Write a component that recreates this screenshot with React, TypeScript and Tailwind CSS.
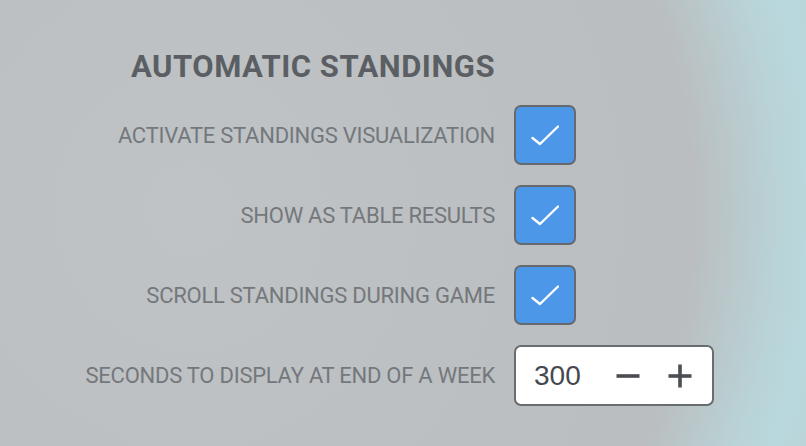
import React from "react";

function Check() {
  return (
    <div className="flex h-[60px] w-[62px] items-center justify-center rounded-[7px] border-2 border-[#66696d] bg-[#4d97e9]">
      <svg width="28" height="22" viewBox="0 0 28 22" className="mt-[1px]">
        <polyline points="1.5,13 9,19 27,1.5" fill="none" stroke="#ffffff" strokeWidth="2.4" strokeLinecap="round" strokeLinejoin="round" />
      </svg>
    </div>
  );
}

function Label({ children }: { children: React.ReactNode }) {
  return (
    <div className="flex h-[60px] items-center justify-end whitespace-nowrap text-[22px] tracking-[-0.25px] text-[#74787c]" style={{ fontFamily: "Roboto, 'Liberation Sans', sans-serif" }}>
      {children}
    </div>
  );
}

export default function App() {
  return (
    <div className="h-[446px] w-[806px] overflow-hidden bg-[#bcc0c2] bg-[radial-gradient(ellipse_600px_640px_at_190px_210px,#bfc3c5_0%,#bbbfc1_60%,#babec0_84%,#b9d4d8_99%,#b9d8dd_104%,#bbcdd0_122%,#bcc6c8_145%)]">
      <div className="pt-[48px]">
        <div className="grid grid-cols-[495px_auto] gap-x-[19px] gap-y-[20px]">
          <div
            className="-mb-[1px] flex h-[38px] items-center justify-end whitespace-nowrap text-[31px] font-bold tracking-[0.5px] text-[#5b5f63]"
            style={{ fontFamily: "Roboto, 'Liberation Sans', sans-serif" }}
          >
            AUTOMATIC STANDINGS
          </div>
          <div />
          <Label>ACTIVATE STANDINGS VISUALIZATION</Label>
          <Check />
          <Label>SHOW AS TABLE RESULTS</Label>
          <Check />
          <Label>SCROLL STANDINGS DURING GAME</Label>
          <Check />
          <Label>SECONDS TO DISPLAY AT END OF A WEEK</Label>
          <div className="flex h-[61px] w-[200px] items-center rounded-[7px] border-2 border-[#6a6d70] bg-white pl-[18px]">
            <span className="w-[63px] text-[28px] text-[#45494f]" style={{ fontFamily: "'Liberation Sans', Arial, sans-serif" }}>
              300
            </span>
            <svg width="24" height="24" viewBox="0 0 24 24" className="ml-[19px]">
              <rect x="0.5" y="10.2" width="23" height="3.6" fill="#4a4d52" />
            </svg>
            <svg width="24" height="24" viewBox="0 0 24 24" className="ml-[28px]">
              <rect x="0.5" y="10.2" width="23" height="3.6" fill="#4a4d52" />
              <rect x="10.2" y="0.5" width="3.6" height="23" fill="#4a4d52" />
            </svg>
          </div>
        </div>
      </div>
    </div>
  );
}
